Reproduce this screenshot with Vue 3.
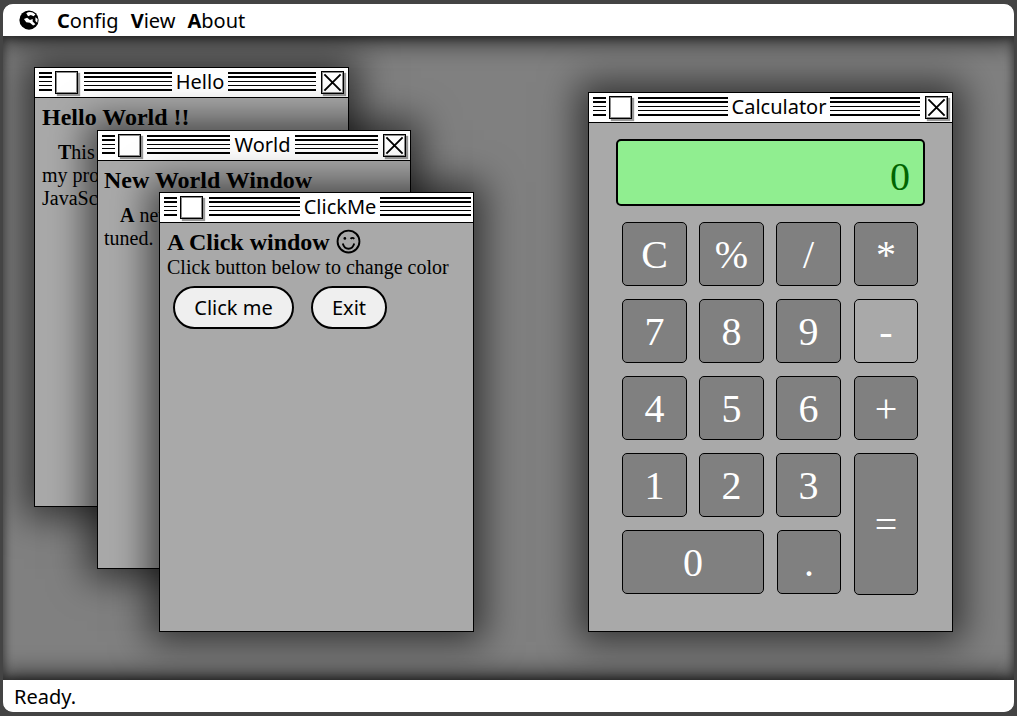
<script setup>
const keys = [
  { label: 'C', cls: '' }, { label: '%', cls: '' }, { label: '/', cls: '' }, { label: '*', cls: 'last' },
  { label: '7', cls: '' }, { label: '8', cls: '' }, { label: '9', cls: '' }, { label: '-', cls: 'last hover' },
  { label: '4', cls: '' }, { label: '5', cls: '' }, { label: '6', cls: '' }, { label: '+', cls: 'last' },
  { label: '1', cls: '' }, { label: '2', cls: '' }, { label: '3', cls: '' }, { label: '=', cls: 'last tall' },
  { label: '0', cls: 'wide' }, { label: '.', cls: 'dot' }
]
</script>

<template>
  <div class="screen">
    <div class="frame">
      <header class="menubar">
        <svg class="globe" viewBox="0 0 24 24" aria-hidden="true">
          <circle cx="12" cy="12" r="10.5" fill="#000" />
          <path d="M9 4.500C12 2.500 16 3 19 6L17 8L14 6.500L11 8ZM6.500 11L10 9.500L13 12L16 11L16 13.500L19 16.500L16.500 18L13 15L9 14.500ZM19 9L21.500 11L21 15L19 13Z" fill="#fff" />
        </svg>
        <span class="menu"><b>C</b>onfig</span>
        <span class="menu"><b>V</b>iew</span>
        <span class="menu"><b>A</b>bout</span>
      </header>

      <main class="desktop">
        <section class="win hello">
          <div class="title">
            <span class="lines short"></span><span class="box"></span><span class="lines"></span>
            <span class="name">Hello</span>
            <span class="lines"></span><span class="box close"><svg viewBox="0 0 22 22"><path d="M2.500 2.500L19.500 19.500M19.500 2.500L2.500 19.500" /></svg></span>
          </div>
          <div class="body">
            <h3>Hello World !!</h3>
            <p class="indent"><b>T</b>his is my first window in<br>my project, written in pure<br>JavaScript.</p>
          </div>
        </section>

        <section class="win world">
          <div class="title">
            <span class="lines short"></span><span class="box"></span><span class="lines"></span>
            <span class="name">World</span>
            <span class="lines"></span><span class="box close"><svg viewBox="0 0 22 22"><path d="M2.500 2.500L19.500 19.500M19.500 2.500L2.500 19.500" /></svg></span>
          </div>
          <div class="body">
            <h3>New World Window</h3>
            <p class="indent"><b>A</b> new window, stay<br>tuned.</p>
          </div>
        </section>

        <section class="win click">
          <div class="title">
            <span class="lines short"></span><span class="box"></span><span class="lines"></span>
            <span class="name">ClickMe</span>
            <span class="lines"></span>
          </div>
          <div class="body">
            <h3 class="smileline">A Click window
              <svg class="smile" viewBox="0 0 24 24" aria-hidden="true">
                <circle cx="12" cy="12" r="10.500" />
                <path d="M6.500 14c1 3.500 3 5 5.500 5s4.500-1.500 5.500-5" />
                <circle class="eye" cx="8.500" cy="9" r="1.300" />
                <path d="M14 9.500c1-1.300 2.500-1.300 3.500 0" />
              </svg>
            </h3>
            <div class="plain">Click button below to change color</div>
            <div class="actions">
              <button class="pill first">Click me</button>
              <button class="pill">Exit</button>
            </div>
          </div>
        </section>

        <section class="win calc">
          <div class="title">
            <span class="lines short"></span><span class="box"></span><span class="lines"></span>
            <span class="name">Calculator</span>
            <span class="lines"></span><span class="box close"><svg viewBox="0 0 22 22"><path d="M2.500 2.500L19.500 19.500M19.500 2.500L2.500 19.500" /></svg></span>
          </div>
          <div class="calcbody">
            <div class="display">0</div>
            <div class="keys">
              <button v-for="k in keys" :key="k.label" class="key" :class="k.cls">{{ k.label }}</button>
            </div>
          </div>
        </section>
      </main>

      <footer class="status">Ready.</footer>
    </div>
  </div>
</template>

<style>
html, body { margin: 0; padding: 0; background: #444; }
</style>

<style scoped>
.screen {
  width: 1017px;
  height: 716px;
  box-sizing: border-box;
  padding: 4px 3px;
  background: #444;
  overflow: hidden;
  font-family: "Noto Sans", "Open Sans", sans-serif;
}
.frame {
  height: 100%;
  display: flex;
  flex-direction: column;
  border-radius: 10px;
  overflow: hidden;
  background: #fff;
}
.menubar {
  flex: 0 0 32px;
  display: flex;
  align-items: center;
  background: #fff;
  padding-left: 15px;
  font-size: 20px;
  color: #000;
  position: relative;
  z-index: 2;
  box-shadow: 0 0 24px 6px rgba(0, 0, 0, .65);
}
.globe { width: 22px; height: 22px; margin-right: 17px; }
.menu { margin-right: 12px; }
.menu b { font-weight: 700; }
.desktop {
  flex: 1;
  min-height: 0;
  position: relative;
  background: #808080;
  box-shadow: inset 0 0 8px 2px #404040;
}
.status {
  flex: 0 0 32px;
  box-sizing: border-box;
  padding: 2px 0 0 11px;
  background: #fff;
  font-size: 20px;
  line-height: 30px;
  color: #000;
  position: relative;
  z-index: 2;
  box-shadow: 0 0 24px 6px rgba(0, 0, 0, .65);
}
.win {
  position: absolute;
  box-sizing: border-box;
  border: 1px solid #000;
  background: #a9a9a9;
  box-shadow: 0 0 35px 10px rgba(0, 0, 0, .6);
  display: flex;
  flex-direction: column;
}
.hello { left: 31px; top: 31px; width: 315px; height: 440px; }
.world { left: 94px; top: 94px; width: 314px; height: 439px; }
.click { left: 156px; top: 156px; width: 315px; height: 440px; }
.calc { left: 585px; top: 56px; width: 365px; height: 540px; }
.title {
  flex: 0 0 30px;
  box-sizing: border-box;
  padding: 3px 4px 0 4px;
  background: #fff;
  border-bottom: 1px solid #000;
  display: flex;
  align-items: flex-start;
  gap: 5px;
}
.click .title { padding-right: 2px; }
.lines {
  flex: 1;
  height: 20px;
  margin-top: 1px;
  background: repeating-linear-gradient(to bottom, #000 0, #000 1.500px, #fff 1.500px, #fff 4.330px);
}
.lines.short { flex: 0 0 13px; margin-right: -2px; }
.box {
  flex: 0 0 23px;
  width: 23px;
  height: 23px;
  box-sizing: border-box;
  border: 1px solid #000;
  background: #fff;
  box-shadow: inset 0 0 0 1px rgba(0, 0, 0, .45), 2px 2px 1px #999;
}
.box:not(.close) { margin-right: 1px; }
.box svg { display: block; width: 100%; height: 100%; }
.box path { stroke: #000; stroke-width: 2; fill: none; }
.name {
  font-size: 20px;
  line-height: 22px;
  margin: 0 -1px;
  color: #000;
  white-space: nowrap;
}
.body {
  flex: 1;
  padding: 5px 7px;
  font-family: "Liberation Serif", serif;
  font-size: 20px;
  line-height: 23px;
  color: #000;
}
.world .body { padding-left: 6px; }
h3 {
  margin: 0;
  font-size: 24px;
  line-height: 28px;
  font-weight: 700;
}
.indent { margin: 10px 0 0; text-indent: 16px; }
.smileline { display: flex; align-items: center; gap: 6px; }
.smile { width: 25px; height: 25px; margin-top: -2px; }
.smile circle, .smile path { fill: none; stroke: #000; stroke-width: 1.800; }
.smile .eye { fill: #000; stroke: none; }
.plain { margin-top: 0; }
.actions { display: flex; gap: 17px; margin: 7px 0 0 6px; }
.pill {
  height: 43px;
  box-sizing: border-box;
  border: 2px solid #000;
  border-radius: 22px;
  background: #efefef;
  font-family: "Noto Sans", "Open Sans", sans-serif;
  font-size: 20px;
  color: #000;
  width: 76px;
  padding: 0;
}
.pill.first { width: 121px; }
.calcbody {
  flex: 1;
  position: relative;
  padding: 16px 27px 0;
}
.display {
  width: 309px;
  height: 67px;
  box-sizing: border-box;
  border: 2px solid #000;
  border-radius: 5px;
  background: #90ee90;
  color: #006400;
  font-family: "Liberation Serif", serif;
  font-size: 40px;
  line-height: 71px;
  text-align: right;
  padding-right: 13px;
}
.keys {
  display: grid;
  grid-template-columns: repeat(4, 65px);
  grid-auto-rows: 64px;
  column-gap: 12px;
  row-gap: 13px;
  margin: 16px 0 0 6px;
}
.key {
  box-sizing: border-box;
  border: 1px solid #000;
  border-radius: 5px;
  background: #808080;
  color: #fff;
  font-family: "Liberation Serif", serif;
  font-size: 40px;
  padding: 0;
}
.key.hover { background: #a9a9a9; }
.key.last { margin-left: 1px; }
.key.tall { grid-row: span 2; height: 142px; }
.key.wide { grid-column: span 2; }
.key.dot { margin-left: 1px; }
</style>
